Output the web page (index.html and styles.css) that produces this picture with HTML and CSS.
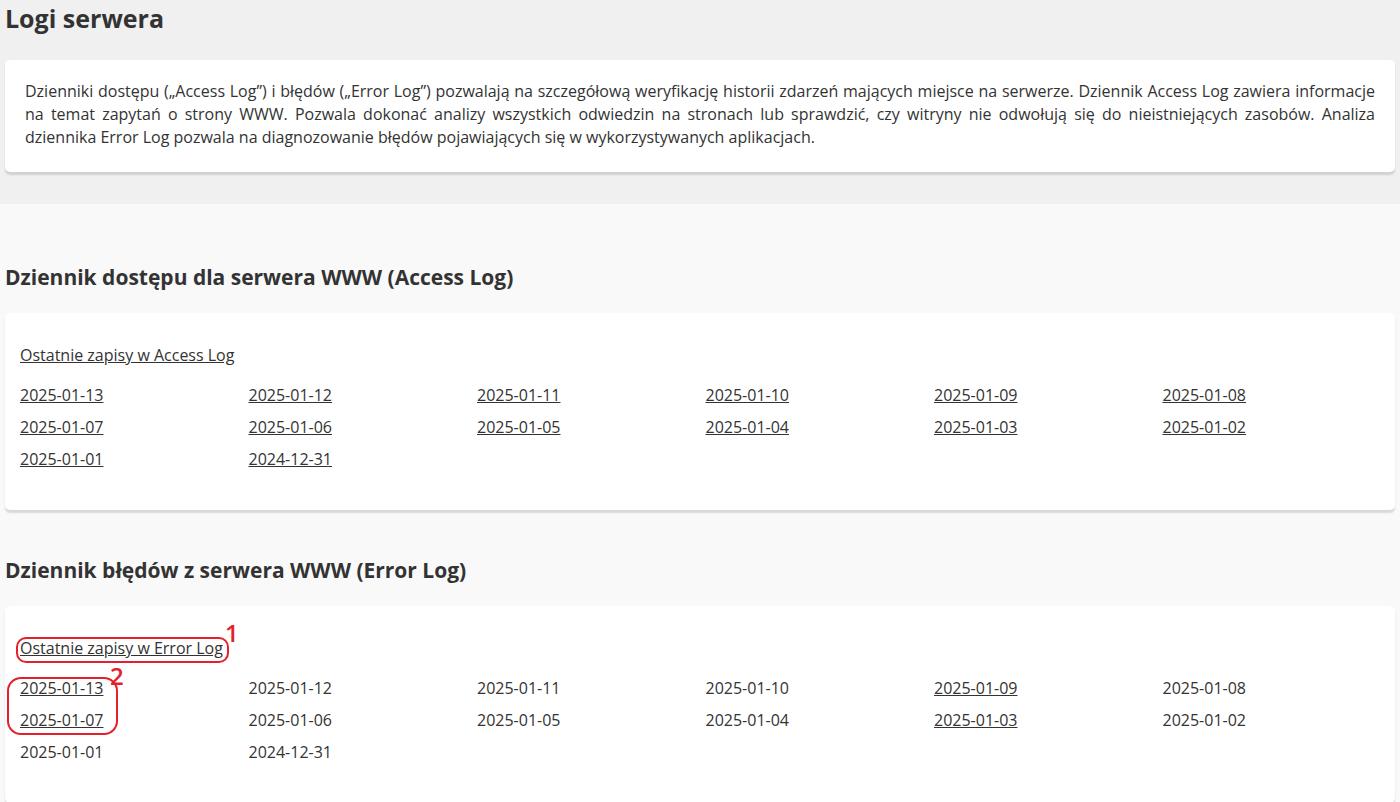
FILE: index.html
```html
<!DOCTYPE html>
<html lang="pl">
<head>
  <meta charset="UTF-8">
  <meta name="viewport" content="width=device-width, initial-scale=1.0">
  <title>Logi serwera</title>
  <link rel="stylesheet" href="styles.css">
</head>
<body>
  <header class="page-head">
    <h1>Logi serwera</h1>
    <div class="card intro">
      <p>Dzienniki dostępu („Access Log”) i błędów („Error Log”) pozwalają na szczegółową weryfikację historii zdarzeń mających miejsce na serwerze. Dziennik Access Log zawiera informacje na temat zapytań o strony WWW. Pozwala dokonać analizy wszystkich odwiedzin na stronach lub sprawdzić, czy witryny nie odwołują się do nieistniejących zasobów. Analiza dziennika Error Log pozwala na diagnozowanie błędów pojawiających się w wykorzystywanych aplikacjach.</p>
    </div>
  </header>

  <main class="logs">
    <section class="log-block">
      <h2>Dziennik dostępu dla serwera WWW (Access Log)</h2>
      <div class="card log-card">
        <a href="#" class="recent">Ostatnie zapisy w Access Log</a>
        <div class="dates">
          <a href="#">2025-01-13</a>
          <a href="#">2025-01-12</a>
          <a href="#">2025-01-11</a>
          <a href="#">2025-01-10</a>
          <a href="#">2025-01-09</a>
          <a href="#">2025-01-08</a>
          <a href="#">2025-01-07</a>
          <a href="#">2025-01-06</a>
          <a href="#">2025-01-05</a>
          <a href="#">2025-01-04</a>
          <a href="#">2025-01-03</a>
          <a href="#">2025-01-02</a>
          <a href="#">2025-01-01</a>
          <a href="#">2024-12-31</a>
        </div>
      </div>
    </section>

    <section class="log-block">
      <h2>Dziennik błędów z serwera WWW (Error Log)</h2>
      <div class="card log-card">
        <a href="#" class="recent">Ostatnie zapisy w Error Log</a>
        <div class="dates">
          <a href="#">2025-01-13</a>
          <span>2025-01-12</span>
          <span>2025-01-11</span>
          <span>2025-01-10</span>
          <a href="#">2025-01-09</a>
          <span>2025-01-08</span>
          <a href="#">2025-01-07</a>
          <span>2025-01-06</span>
          <span>2025-01-05</span>
          <span>2025-01-04</span>
          <a href="#">2025-01-03</a>
          <span>2025-01-02</span>
          <span>2025-01-01</span>
          <span>2024-12-31</span>
        </div>

        <div class="mark mark-recent"></div>
        <span class="mark-num num-1">1</span>
        <div class="mark mark-dates"></div>
        <span class="mark-num num-2">2</span>
      </div>
    </section>
  </main>
</body>
</html>
```

FILE: styles.css
```css
body {
  margin: 0;
  font-family: "Open Sans", "Liberation Sans", sans-serif;
  color: #333;
  background-color: #f9f9f9;
}

.page-head {
  background-color: #f0f0f0;
  padding: 0 5px;
  height: 204px;
  box-sizing: border-box;
}

h1 {
  margin: 0;
  padding-top: 1px;
  font-size: 25px;
  line-height: 34px;
  font-weight: 700;
  height: 59px;
}

.card {
  background-color: #fff;
  border-radius: 5px;
  box-shadow: 0 3px 2px rgba(0, 0, 0, 0.13);
}

.intro {
  padding: 20px 20px 23px 20px;
}

.intro p {
  margin: 0;
  font-size: 16px;
  line-height: 23px;
  text-align: justify;
}

.logs {
  padding: 60px 5px 0 5px;
}

.log-block + .log-block {
  margin-top: 47px;
}

h2 {
  margin: 0 0 22px 0;
  font-size: 21px;
  line-height: 27px;
  font-weight: 700;
}

.log-card {
  position: relative;
  padding: 26px 4px 35px 15px;
  font-size: 16px;
  line-height: 32px;
}

.log-card a {
  color: #333;
  text-decoration: underline;
}

.recent {
  display: inline-block;
  margin-bottom: 8px;
}

.dates {
  display: grid;
  grid-template-columns: repeat(6, 1fr);
}

.dates a,
.dates span {
  justify-self: start;
}

/* red annotation marks */
.mark {
  position: absolute;
  border: 2px solid #e3202b;
  box-sizing: border-box;
}

.mark-recent {
  left: 11px;
  top: 31px;
  width: 213px;
  height: 26px;
  border-radius: 10px;
}

.mark-dates {
  left: 2px;
  top: 71px;
  width: 111px;
  height: 58px;
  border-radius: 14px;
}

.mark-num {
  position: absolute;
  color: #e3202b;
  font-size: 24px;
  line-height: 24px;
  font-weight: 600;
}

.num-1 {
  left: 220px;
  top: 15px;
}

.num-2 {
  left: 105px;
  top: 58px;
}
```
